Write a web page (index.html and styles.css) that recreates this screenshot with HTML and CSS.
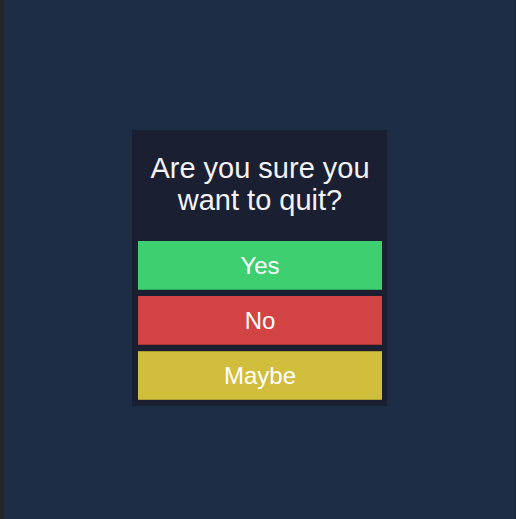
FILE: index.html
```html
<!DOCTYPE html>
<html>
<head>
<meta charset="utf-8">
<link rel="stylesheet" href="styles.css">
</head>
<body>
<div class="screen">
  <div class="dialog">
    <div class="title">Are you sure you<br>want to quit?</div>
    <div class="btn yes">Yes</div>
    <div class="btn no">No</div>
    <div class="btn maybe">Maybe</div>
  </div>
</div>
</body>
</html>
```
FILE: styles.css
```css
html, body {
  margin: 0;
  padding: 0;
  height: 100%;
}
body {
  background: #1d2d45;
  font-family: "Liberation Sans", Arial, sans-serif;
}
.screen {
  box-sizing: border-box;
  height: 519px;
  border-left: 4px solid #262626;
  border-right: 1px solid #1a2535;
  display: flex;
  justify-content: center;
  align-items: flex-start;
  padding-top: 130px;
}
.dialog {
  width: 255px;
  box-sizing: border-box;
  padding: 0 5px 6px 6px;
  background: #1b1f32;
  display: flex;
  flex-direction: column;
  gap: 6px;
}
.title {
  height: 105px;
  display: flex;
  align-items: center;
  justify-content: center;
  text-align: center;
  color: #f4f4f6;
  font-size: 29px;
  line-height: 32px;
  padding-top: 3px;
  box-sizing: border-box;
}
.btn {
  height: 49px;
  display: flex;
  align-items: center;
  justify-content: center;
  color: #ffffff;
  font-size: 24px;
  box-shadow: inset 0 -1px 0 rgba(0,0,0,0.18);
}
.yes { background: #3ecf71; }
.no { background: #d24444; }
.maybe { background: #d1be3c; box-shadow: inset 0 -1px 0 rgba(0,0,0,0.18), inset 0 1px 0 rgba(0,0,0,0.18); }
```
